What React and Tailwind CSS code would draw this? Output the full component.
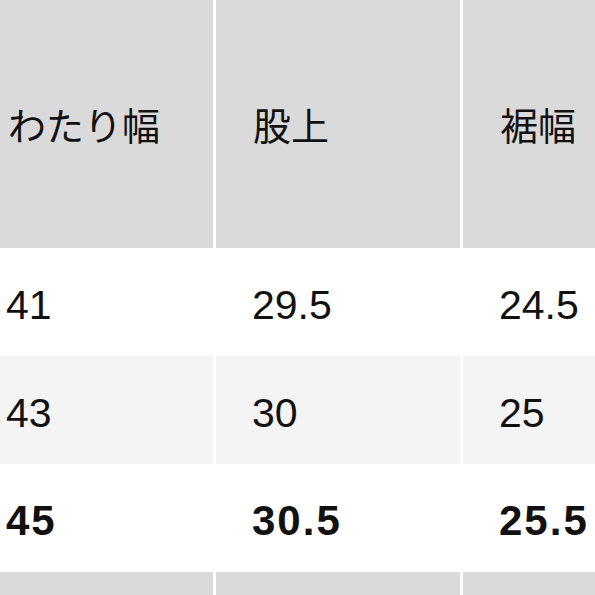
import React from 'react';

const headers = ['わたり幅', '股上', '裾幅'];

const rows = [
    { values: ['41', '29.5', '24.5'], bg: 'bg-white', bold: false },
    { values: ['43', '30', '25'], bg: 'bg-[#f4f4f4]', bold: false },
    { values: ['45', '30.5', '25.5'], bg: 'bg-white', bold: true },
];

const pad = ['pl-[6px]', 'pl-[36px]', 'pl-[36px]'];

function App() {
    return (
        <div className="w-[595px] h-[595px] overflow-hidden bg-white text-[#111]">
            <div className="grid grid-cols-[213px_244px_1fr] gap-x-[3px]">
                {headers.map((h, i) => (
                    <div
                        key={h}
                        className={`h-[248px] bg-[#dadada] flex items-center ${i === 0 ? 'pl-[8px]' : 'pl-[37px]'}`}
                    >
                        <span className="text-[38px] leading-none font-['Noto_Sans_CJK_JP',sans-serif]">{h}</span>
                    </div>
                ))}

                {rows.map((row, r) =>
                    row.values.map((v, i) => (
                        <div
                            key={`${r}-${i}`}
                            className={`h-[108px] flex items-center pt-[6px] ${row.bg} ${pad[i]}`}
                        >
                            <span
                                className={
                                    row.bold
                                        ? "text-[42px] leading-none font-bold tracking-[2px] font-['Liberation_Sans',Arial,sans-serif]"
                                        : "text-[41px] leading-none font-['Liberation_Sans',Arial,sans-serif]"
                                }
                            >
                                {v}
                            </span>
                        </div>
                    ))
                )}

                {headers.map((h) => (
                    <div key={`f-${h}`} className="h-[40px] bg-[#dadada]" />
                ))}
            </div>
        </div>
    );
}

export default App;
